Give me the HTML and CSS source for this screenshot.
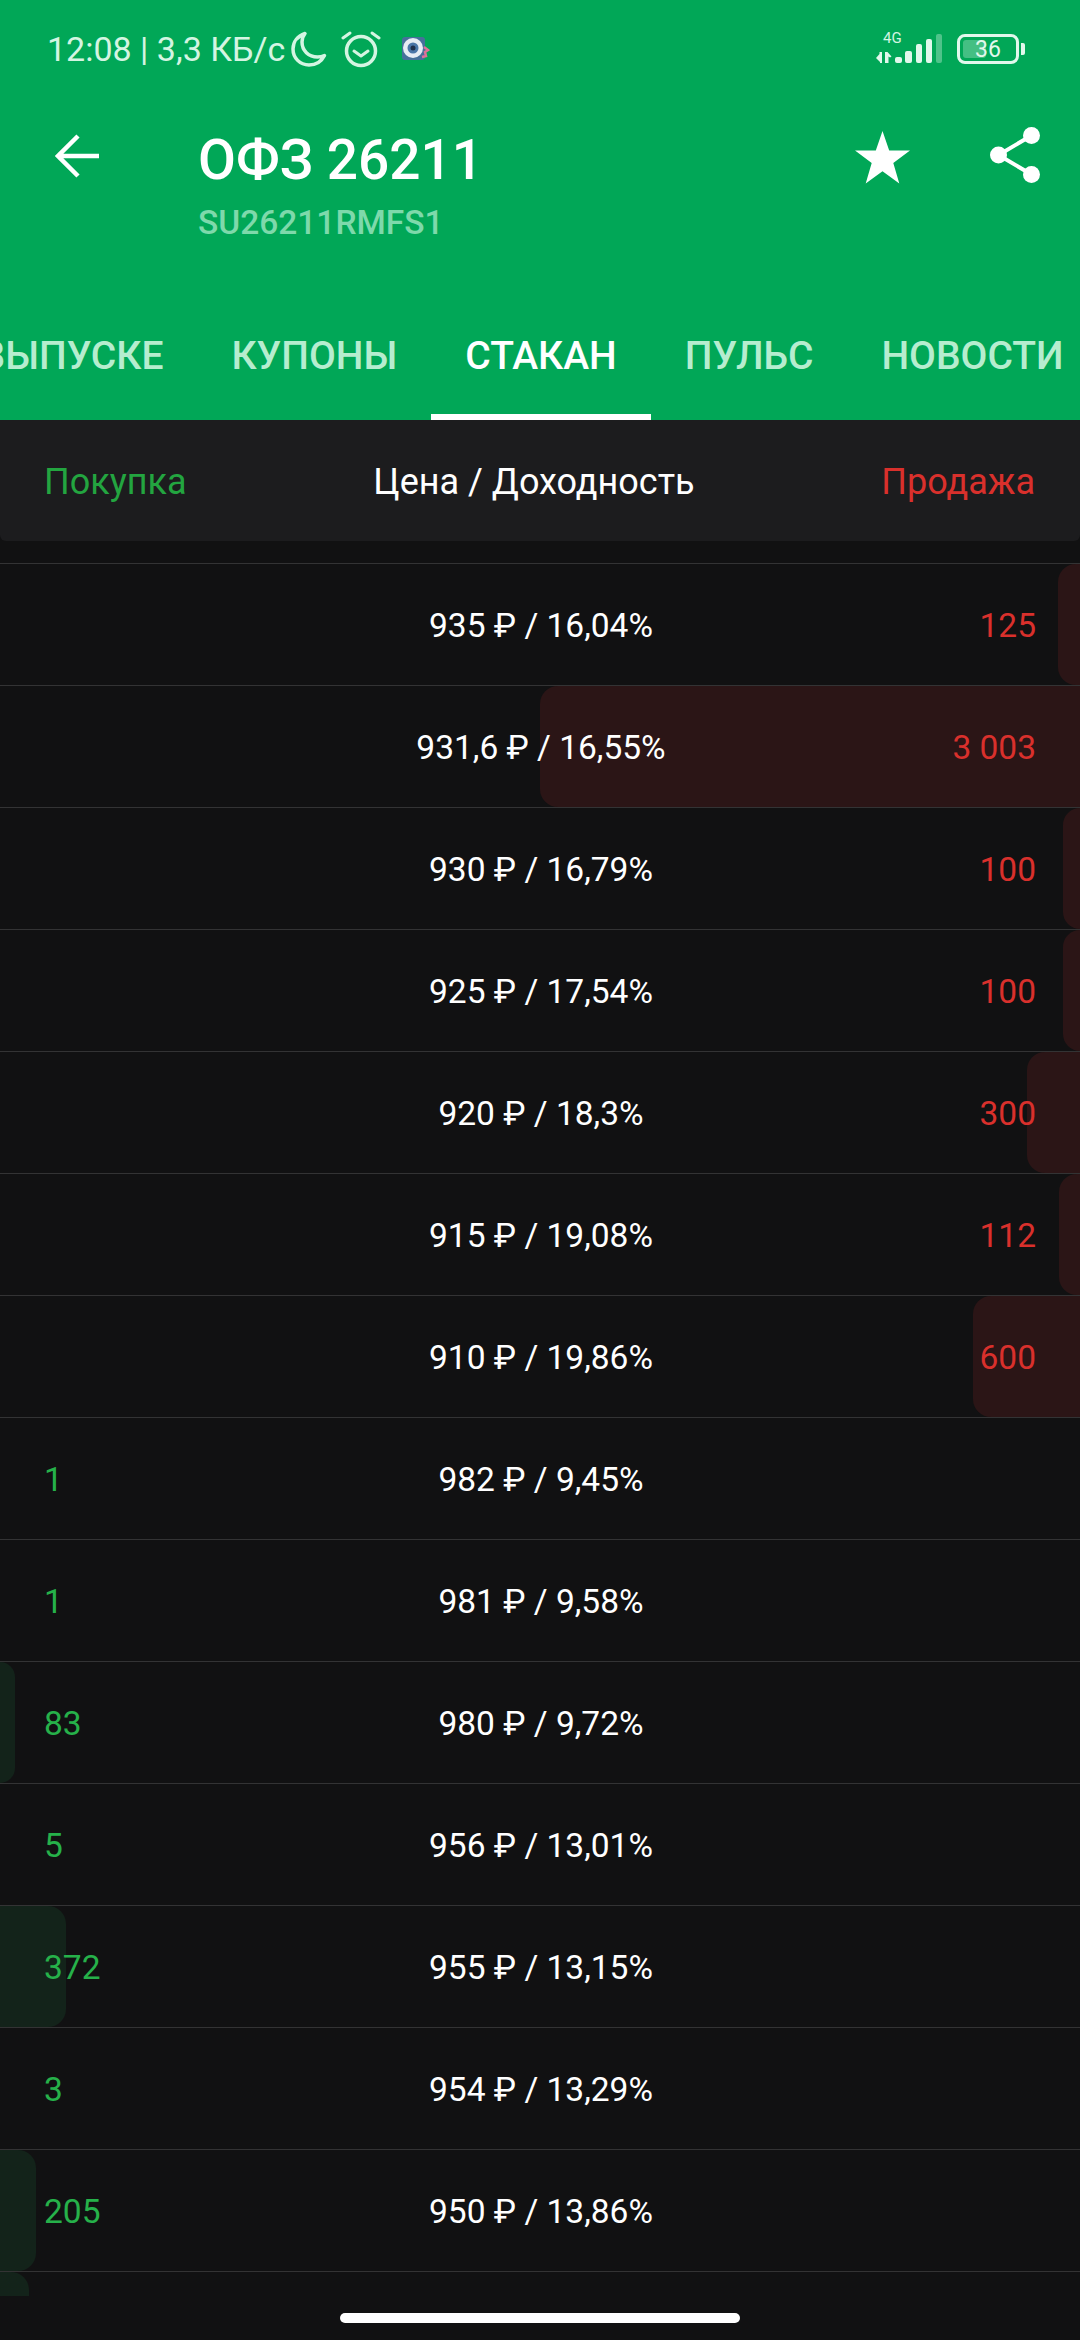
FILE: index.html

```html
<!DOCTYPE html>
<html lang="ru">
<head>
    <meta charset="UTF-8">
    <meta name="viewport" content="width=device-width, initial-scale=1.0">
    <title>ОФЗ 26211</title>
    <link rel="stylesheet" href="styles.css">
</head>
<body>

    <div class="top">
        <div class="status">
            <span class="status-text">12:08 | 3,3 КБ/с</span>
            <svg class="icon-moon" width="36" height="36" viewBox="0 0 36 36"><path d="M14 2.5C6.5 5 2 11 2 18c0 9 7 16 16 16 7 0 12.500-3.500 15.500-9.500-2 1-4.500 1.500-7 1.500C17.500 26 11 19.500 11 11c0-3 1-6 3-8.500z" fill="none" stroke="#d4f5e2" stroke-width="3.500" stroke-linejoin="round"/></svg>
            <svg class="icon-alarm" width="40" height="40" viewBox="0 0 40 40"><circle cx="20" cy="22" r="14.500" fill="none" stroke="#d4f5e2" stroke-width="3.500"/><path d="M13 22l7 5 7-5" fill="none" stroke="#d4f5e2" stroke-width="3" stroke-linecap="round" stroke-linejoin="round"/><path d="M2 9l7-5M38 9l-7-5" fill="none" stroke="#d4f5e2" stroke-width="3" stroke-linecap="round"/></svg>
            <svg class="icon-eye" width="28" height="24" viewBox="0 0 28 24"><rect x="0" y="0" width="23" height="23" rx="3" fill="#46709a"/><circle cx="11" cy="11" r="10" fill="#e6ecf4"/><circle cx="11" cy="11" r="5.500" fill="#4a76a8"/><circle cx="11" cy="11" r="2.500" fill="#1e2f4a"/><path d="M22 10l4 3-3 2 1 4-4 1" fill="none" stroke="#e0709a" stroke-width="2.500"/></svg>
            <span class="status-right">
                <span class="signal">
                    <span class="signal-4g">4G</span>
                    <svg width="68" height="30" viewBox="0 0 68 30"><path d="M1 24l3.500-4v-2h2.500v11H5v-1zM10 29V18h2.500l4 4.500-1.500 1-1.500-1V29z" fill="#e2f8ec"/><rect x="20" y="23" width="7" height="6" rx="2" fill="#e2f8ec"/><rect x="30" y="17" width="7" height="12" rx="2" fill="#e2f8ec"/><rect x="41" y="10" width="6" height="19" rx="2" fill="#e2f8ec"/><rect x="51" y="5" width="6" height="24" rx="2" fill="#e2f8ec"/><rect x="61" y="0" width="6" height="29" rx="2" fill="#e2f8ec" opacity="0.35"/></svg>
                </span>
                <span class="battery">
                    <span class="battery-fill"></span>
                    <span class="battery-num">36</span>
                </span>
                <span class="battery-nub"></span>
            </span>
        </div>

        <div class="title-row">
            <svg class="icon-back" width="46" height="46" viewBox="0 0 46 46"><path d="M44 23H4M23 3L3 23l20 20" fill="none" stroke="#fff" stroke-width="4.500"/></svg>
            <div class="title-block">
                <div class="title">ОФЗ 26211</div>
                <div class="subtitle">SU26211RMFS1</div>
            </div>
            <svg class="icon-star" width="55" height="53" viewBox="0 0 55 53"><path d="M27.500 0l6.700 19.500H55L38.300 32l6 20.500-16.800-12.300-16.800 12.300 6-20.500L0 19.500h20.800z" fill="#fff"/></svg>
            <svg class="icon-share" width="50" height="56" viewBox="0 0 50 56"><circle cx="41.500" cy="8.500" r="8.500" fill="#fff"/><circle cx="8.500" cy="28" r="8.500" fill="#fff"/><circle cx="41.500" cy="47.500" r="8.500" fill="#fff"/><path d="M41.500 8.500L8.500 28l33 19.500" fill="none" stroke="#fff" stroke-width="4"/></svg>
        </div>

        <div class="tabs">
            <div class="tab">О ВЫПУСКЕ</div>
            <div class="tab">КУПОНЫ</div>
            <div class="tab tab-active">СТАКАН</div>
            <div class="tab">ПУЛЬС</div>
            <div class="tab">НОВОСТИ</div>
        </div>
    </div>

    <div class="book-head">
        <span class="buy-title">Покупка</span>
        <span class="price-title">Цена / Доходность</span>
        <span class="sell-title">Продажа</span>
    </div>

    <div class="book">
        <div class="row"><div class="bar bar-sell" style="width: 22px"></div><span class="buy"></span><span class="price">935 ₽ / 16,04%</span><span class="sell">125</span></div>
        <div class="row"><div class="bar bar-sell" style="width: 540px"></div><span class="buy"></span><span class="price">931,6 ₽ / 16,55%</span><span class="sell">3 003</span></div>
        <div class="row"><div class="bar bar-sell" style="width: 17px"></div><span class="buy"></span><span class="price">930 ₽ / 16,79%</span><span class="sell">100</span></div>
        <div class="row"><div class="bar bar-sell" style="width: 17px"></div><span class="buy"></span><span class="price">925 ₽ / 17,54%</span><span class="sell">100</span></div>
        <div class="row"><div class="bar bar-sell" style="width: 53px"></div><span class="buy"></span><span class="price">920 ₽ / 18,3%</span><span class="sell">300</span></div>
        <div class="row"><div class="bar bar-sell" style="width: 21px"></div><span class="buy"></span><span class="price">915 ₽ / 19,08%</span><span class="sell">112</span></div>
        <div class="row"><div class="bar bar-sell" style="width: 107px"></div><span class="buy"></span><span class="price">910 ₽ / 19,86%</span><span class="sell">600</span></div>
        <div class="row"><span class="buy">1</span><span class="price">982 ₽ / 9,45%</span><span class="sell"></span></div>
        <div class="row"><span class="buy">1</span><span class="price">981 ₽ / 9,58%</span><span class="sell"></span></div>
        <div class="row"><div class="bar bar-buy" style="width: 15px"></div><span class="buy">83</span><span class="price">980 ₽ / 9,72%</span><span class="sell"></span></div>
        <div class="row"><span class="buy">5</span><span class="price">956 ₽ / 13,01%</span><span class="sell"></span></div>
        <div class="row"><div class="bar bar-buy" style="width: 66px"></div><span class="buy">372</span><span class="price">955 ₽ / 13,15%</span><span class="sell"></span></div>
        <div class="row"><span class="buy">3</span><span class="price">954 ₽ / 13,29%</span><span class="sell"></span></div>
        <div class="row"><div class="bar bar-buy" style="width: 36px"></div><span class="buy">205</span><span class="price">950 ₽ / 13,86%</span><span class="sell"></span></div>
        <div class="row"><div class="bar bar-buy" style="width: 29px"></div><span class="buy"></span><span class="price"></span><span class="sell"></span></div>
    </div>

    <div class="nav-bar">
        <div class="home-pill"></div>
    </div>

</body>
</html>
```

FILE: styles.css

```css
* {
    box-sizing: border-box;
}
html, body {
    margin: 0;
    height: 2340px;
    overflow: hidden;
}
body {
    font-family: Roboto, "Noto Sans", sans-serif;
    background-color: #111112;
    color: white;
    display: flex;
    flex-direction: column;
}

/* green header */
.top {
    height: 420px;
    flex: none;
    background-color: #01a757;
    overflow: hidden;
}
.status {
    display: flex;
    align-items: center;
    height: 98px;
    padding: 0 55px 0 47px;
    color: #d4f5e2;
}
.status-text {
    font-size: 34px;
    width: 244px;
    white-space: nowrap;
}
.icon-moon {
    margin-right: 14px;
}
.icon-alarm {
    margin-right: 21px;
}
.status-right {
    margin-left: auto;
    display: flex;
    align-items: center;
}
.signal {
    position: relative;
    display: flex;
    align-items: flex-end;
    height: 30px;
    margin-right: 14px;
}
.signal-4g {
    position: absolute;
    left: 8px;
    top: -3px;
    font-size: 15px;
    line-height: 15px;
}
.battery {
    position: relative;
    display: flex;
    align-items: center;
    justify-content: center;
    width: 62px;
    height: 30px;
    border: 3.500px solid #e2f8ec;
    border-radius: 8px;
}
.battery-fill {
    position: absolute;
    left: 3px;
    top: 3px;
    bottom: 3px;
    width: 23px;
    border-radius: 3px;
    background-color: rgba(226, 248, 236, 0.3);
}
.battery-num {
    position: relative;
    font-size: 23px;
    line-height: 23px;
    color: #e2f8ec;
}
.battery-nub {
    width: 4px;
    height: 12px;
    margin-left: 2px;
    border-radius: 0 2px 2px 0;
    background-color: #e2f8ec;
}
.title-row {
    display: flex;
    align-items: flex-start;
    height: 215px;
    padding: 34px 40px 0 55px;
}
.icon-back {
    margin-top: 1px;
}
.title-block {
    margin-left: 97px;
    flex: 1;
}
.title {
    font-size: 55px;
    font-weight: 500;
    line-height: 60px;
    margin-top: -2px;
}
.subtitle {
    font-size: 33.500px;
    font-weight: 500;
    line-height: 38px;
    margin-top: 14px;
    color: #7ed9ab;
}
.icon-star {
    margin: -1px 80px 0 0;
}
.icon-share {
    margin-top: -5px;
}
.tabs {
    display: flex;
    height: 107px;
    margin-left: -90px;
}
.tab {
    flex: none;
    padding: 0 34px;
    height: 107px;
    line-height: 86px;
    font-size: 39px;
    font-weight: 500;
    white-space: nowrap;
    color: #b6edcf;
}
.tab-active {
    color: white;
    border-bottom: 6px solid white;
}

/* order book */
.book-head {
    flex: none;
    display: flex;
    justify-content: space-between;
    align-items: center;
    height: 121px;
    padding: 3px 45px 0 44px;
    font-size: 36px;
    background-color: #1c1c1e;
    border-radius: 0 0 6px 6px;
}
.buy-title {
    color: #23a540;
}
.sell-title {
    color: #d9302c;
}
.book {
    flex: 1;
    margin-top: 22px;
    overflow: hidden;
}
.row {
    position: relative;
    display: grid;
    grid-template-columns: 1fr auto 1fr;
    align-items: center;
    height: 122px;
    padding: 2px 44px 0;
    border-top: 1px solid #333334;
    font-size: 33.500px;
}
.bar {
    position: absolute;
    top: 0;
    bottom: 0;
}
.bar-sell {
    right: 0;
    background-color: #2b1516;
    border-radius: 18px 0 0 18px;
}
.bar-buy {
    left: 0;
    background-color: #13231a;
    border-radius: 0 18px 18px 0;
}
.buy, .sell {
    position: relative;
}
.price {
    position: relative;
    padding-left: 2px;
}
.buy {
    color: #26b14a;
}
.sell {
    color: #d9302c;
    text-align: right;
}
.nav-bar {
    flex: none;
    height: 44px;
    display: flex;
    justify-content: center;
    padding-top: 17px;
}
.home-pill {
    width: 400px;
    height: 10px;
    border-radius: 5px;
    background-color: white;
}
```
